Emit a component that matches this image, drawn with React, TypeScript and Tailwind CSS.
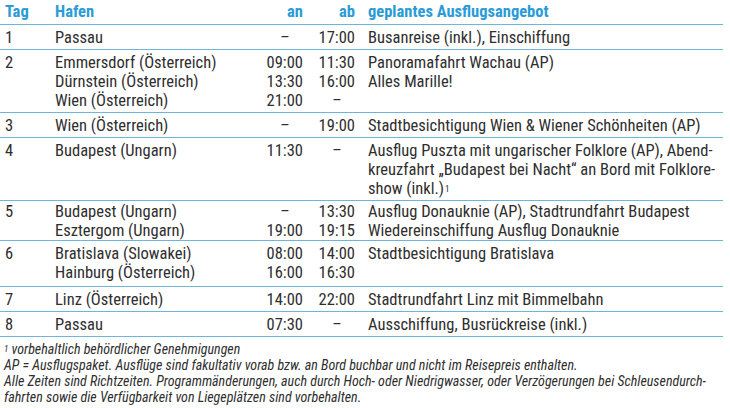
import React from 'react';

type Row = {
  tag: string;
  ports: string[];
  an: string[];
  ab: string[];
  offer: React.ReactNode;
  pad?: string;
};

const rows: Row[] = [
  { tag: '1', ports: ['Passau'], an: ['–'], ab: ['17:00'], offer: 'Busanreise (inkl.), Einschiffung' },
  {
    tag: '2',
    ports: ['Emmersdorf (Österreich)', 'Dürnstein (Österreich)', 'Wien (Österreich)'],
    an: ['09:00', '13:30', '21:00'],
    ab: ['11:30', '16:00', '–'],
    offer: (
      <>
        Panoramafahrt Wachau (AP)
        <br />
        Alles Marille!
      </>
    )
  },
  {
    tag: '3',
    ports: ['Wien (Österreich)'],
    an: ['–'],
    ab: ['19:00'],
    offer: 'Stadtbesichtigung Wien & Wiener Schönheiten (AP)'
  },
  {
    tag: '4',
    ports: ['Budapest (Ungarn)'],
    an: ['11:30'],
    ab: ['–'],
    offer: (
      <>
        Ausflug Puszta mit ungarischer Folklore (AP), Abend-
        <br />
        kreuzfahrt „Budapest bei Nacht“ an Bord mit Folklore-
        <br />
        show (inkl.)<span className="text-[9px] align-top relative top-[1px] ml-[1px]">1</span>
      </>
    )
  },
  {
    tag: '5',
    ports: ['Budapest (Ungarn)', 'Esztergom (Ungarn)'],
    an: ['–', '19:00'],
    ab: ['13:30', '19:15'],
    offer: (
      <>
        Ausflug Donauknie (AP), Stadtrundfahrt Budapest
        <br />
        Wiedereinschiffung Ausflug Donauknie
      </>
    ),
    pad: 'pt-[1px] pb-0'
  },
  {
    tag: '6',
    ports: ['Bratislava (Slowakei)', 'Hainburg (Österreich)'],
    an: ['08:00', '16:00'],
    ab: ['14:00', '16:30'],
    offer: 'Stadtbesichtigung Bratislava',
    pad: 'pt-[3px] pb-[4px]'
  },
  { tag: '7', ports: ['Linz (Österreich)'], an: ['14:00'], ab: ['22:00'], offer: 'Stadtrundfahrt Linz mit Bimmelbahn' },
  { tag: '8', ports: ['Passau'], an: ['07:30'], ab: ['–'], offer: 'Ausschiffung, Busrückreise (inkl.)' }
];

const grid = 'grid grid-cols-[55px_188px_60px_52px_368px] border-b border-[#6cb6dc]';

// times are right aligned, the dash sits centred under where a time would be
const Time = ({ t }: { t: string }) =>
  t === '–' ? (
    <div className="flex justify-end">
      <span className="w-[36px] text-center">–</span>
    </div>
  ) : (
    <div>{t}</div>
  );

const App = () => {
  return (
    <div className="w-[730px] h-[408px] bg-white text-[#2e2e2e] overflow-hidden font-['Roboto_Condensed',Roboto,sans-serif] font-stretch-condensed">
      <div className="w-[723px] text-[16.5px] leading-[19px]">
        <div className={`${grid} font-bold text-[#2a9bd6] pt-[2px] pb-[3px]`}>
          <div className="pl-[5px]">Tag</div>
          <div>Hafen</div>
          <div className="text-right">an</div>
          <div className="text-right">ab</div>
          <div className="pl-[13px]">geplantes Ausflugsangebot</div>
        </div>
        {rows.map((r) => (
          <div key={r.tag} className={`${grid} ${r.pad ?? 'pt-[3px] pb-[2px]'}`}>
            <div className="pl-[5px]">{r.tag}</div>
            <div>
              {r.ports.map((p) => (
                <div key={p}>{p}</div>
              ))}
            </div>
            <div className="text-right">
              {r.an.map((t, i) => (
                <Time key={i} t={t} />
              ))}
            </div>
            <div className="text-right">
              {r.ab.map((t, i) => (
                <Time key={i} t={t} />
              ))}
            </div>
            <div className="pl-[13px]">{r.offer}</div>
          </div>
        ))}
      </div>
      <div className="pl-[4px] pt-[4px] italic text-[14px] leading-[16px]">
        <p>
          <span className="text-[9px] align-top">1</span> vorbehaltlich behördlicher Genehmigungen
        </p>
        <p>AP = Ausflugspaket. Ausflüge sind fakultativ vorab bzw. an Bord buchbar und nicht im Reisepreis enthalten.</p>
        <p>
          Alle Zeiten sind Richtzeiten. Programmänderungen, auch durch Hoch- oder Niedrigwasser, oder Verzögerungen bei
          Schleusendurch-
        </p>
        <p>fahrten sowie die Verfügbarkeit von Liegeplätzen sind vorbehalten.</p>
      </div>
    </div>
  );
};

export default App;
